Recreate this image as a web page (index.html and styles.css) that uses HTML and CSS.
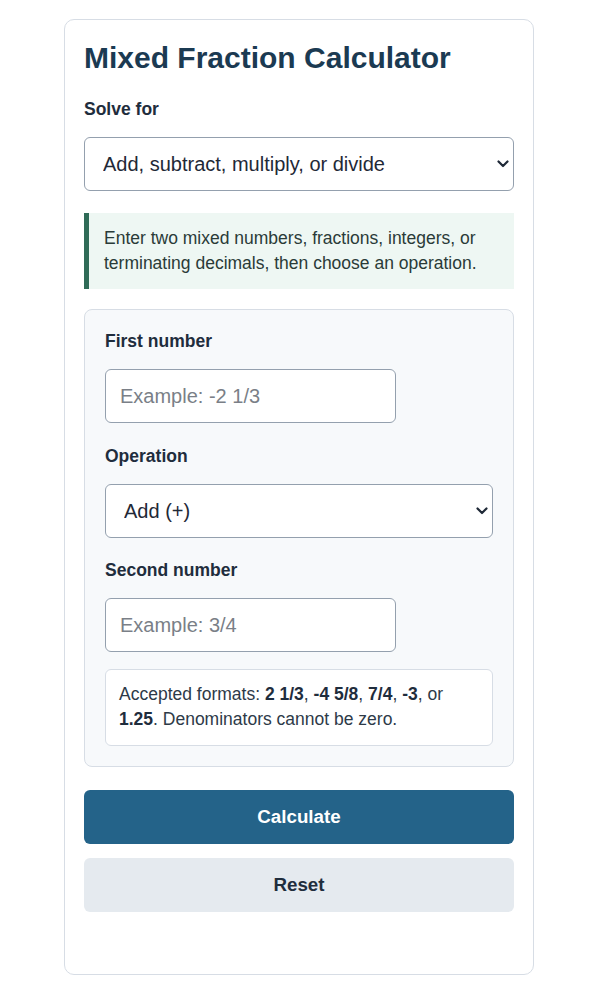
FILE: index.html
```html
<!DOCTYPE html>
<html lang="en">
<head>
    <meta charset="UTF-8">
    <meta name="viewport" content="width=device-width, initial-scale=1.0">
    <title>Mixed Fraction Calculator</title>
    <link rel="stylesheet" href="styles.css">
</head>
<body>

    <div class="calc-card">
        <h1>Mixed Fraction Calculator</h1>

        <!-- Mode select -->
        <label class="field-label" for="solve-for">Solve for</label>
        <div class="select-wrap">
            <select id="solve-for" class="control select-control">
                <option>Add, subtract, multiply, or divide</option>
                <option>Convert to improper fraction</option>
                <option>Simplify a fraction</option>
            </select>
            <svg class="chevron" width="12" height="8" viewBox="0 0 12 8"><path d="M1.5 1.5 L6 6 L10.5 1.5" fill="none" stroke="#1f2937" stroke-width="2.2" stroke-linecap="round" stroke-linejoin="round"/></svg>
        </div>

        <p class="info-note">Enter two mixed numbers, fractions, integers, or terminating decimals, then choose an operation.</p>

        <!-- Inputs -->
        <div class="input-panel">
            <div class="field">
                <label class="field-label" for="first-number">First number</label>
                <input type="text" id="first-number" class="control text-control" placeholder="Example: -2 1/3">
            </div>

            <div class="field">
                <label class="field-label" for="operation">Operation</label>
                <div class="select-wrap">
                    <select id="operation" class="control select-control">
                        <option>Add (+)</option>
                        <option>Subtract (&minus;)</option>
                        <option>Multiply (&times;)</option>
                        <option>Divide (&divide;)</option>
                    </select>
                    <svg class="chevron" width="12" height="8" viewBox="0 0 12 8"><path d="M1.5 1.5 L6 6 L10.5 1.5" fill="none" stroke="#1f2937" stroke-width="2.2" stroke-linecap="round" stroke-linejoin="round"/></svg>
                </div>
            </div>

            <div class="field">
                <label class="field-label" for="second-number">Second number</label>
                <input type="text" id="second-number" class="control text-control" placeholder="Example: 3/4">
            </div>

            <p class="format-hint">Accepted formats: <b>2 1/3</b>, <b>-4 5/8</b>, <b>7/4</b>, <b>-3</b>, or <b>1.25</b>. Denominators cannot be zero.</p>
        </div>

        <button class="btn btn-primary">Calculate</button>
        <button class="btn btn-secondary">Reset</button>

        <div class="result" id="result"></div>
    </div>

</body>
</html>
```

FILE: styles.css
```css
body {
    margin: 0;
    font-family: "Liberation Sans", Arial, sans-serif;
    background-color: #ffffff;
    color: #1f2d3d;
}

/* Card */
.calc-card {
    width: 430px;
    margin: 19px 0 0 64px;
    padding: 20px 19px 20px 19px;
    border: 1px solid #d7dde5;
    border-radius: 10px;
    background-color: #fff;
}

h1 {
    margin: 0 0 22px 0;
    font-size: 30px;
    line-height: 36px;
    font-weight: 700;
    color: #1b3a52;
}

.field-label {
    display: block;
    font-size: 17.5px;
    line-height: 22px;
    font-weight: 700;
    color: #1f2d3d;
    margin-bottom: 17px;
}

/* Controls */
.control {
    box-sizing: border-box;
    height: 54px;
    font-family: inherit;
    font-size: 20px;
    color: #1f2937;
    background-color: #fff;
    border: 1px solid #94a0ae;
    border-radius: 6px;
    outline: none;
}

.select-wrap {
    position: relative;
}

.select-control {
    width: 100%;
    padding: 0 40px 0 18px;
    appearance: none;
    -webkit-appearance: none;
}

.chevron {
    position: absolute;
    right: 5px;
    top: 23px;
    pointer-events: none;
}

.text-control {
    width: 291px;
    padding: 0 14px;
}

.text-control::placeholder {
    color: #7a7f87;
}

/* Info note */
.info-note {
    margin: 22px 0 20px 0;
    padding: 13px 15px 13px 15px;
    border-left: 5px solid #2f6b57;
    background-color: #eef7f3;
    font-size: 17.5px;
    line-height: 25px;
    color: #2a3b38;
}

/* Input panel */
.input-panel {
    padding: 20px 20px 20px 20px;
    border: 1px solid #d7dde5;
    border-radius: 8px;
    background-color: #f7f9fb;
}

.field {
    margin-bottom: 21.5px;
}

.field:nth-child(3) {
    margin-bottom: 17px;
}

.format-hint {
    margin: 0;
    padding: 12px 13px 13px 13px;
    border: 1px solid #d7dde5;
    border-radius: 6px;
    background-color: #fff;
    font-size: 17.5px;
    line-height: 25px;
    color: #2d3a48;
}

.format-hint b {
    color: #1f2d3d;
}

/* Buttons */
.btn {
    display: block;
    width: 100%;
    height: 54px;
    border: none;
    border-radius: 6px;
    font-family: inherit;
    font-size: 18.75px;
    font-weight: 700;
    cursor: pointer;
}

.btn-primary {
    margin-top: 23px;
    background-color: #246389;
    color: #fff;
}

.btn-primary:hover {
    background-color: #1d5273;
}

.btn-secondary {
    margin-top: 14px;
    background-color: #e5eaef;
    color: #1f2d3d;
}

.btn-secondary:hover {
    background-color: #d9dfe6;
}

.result {
    height: 42px;
}
```
